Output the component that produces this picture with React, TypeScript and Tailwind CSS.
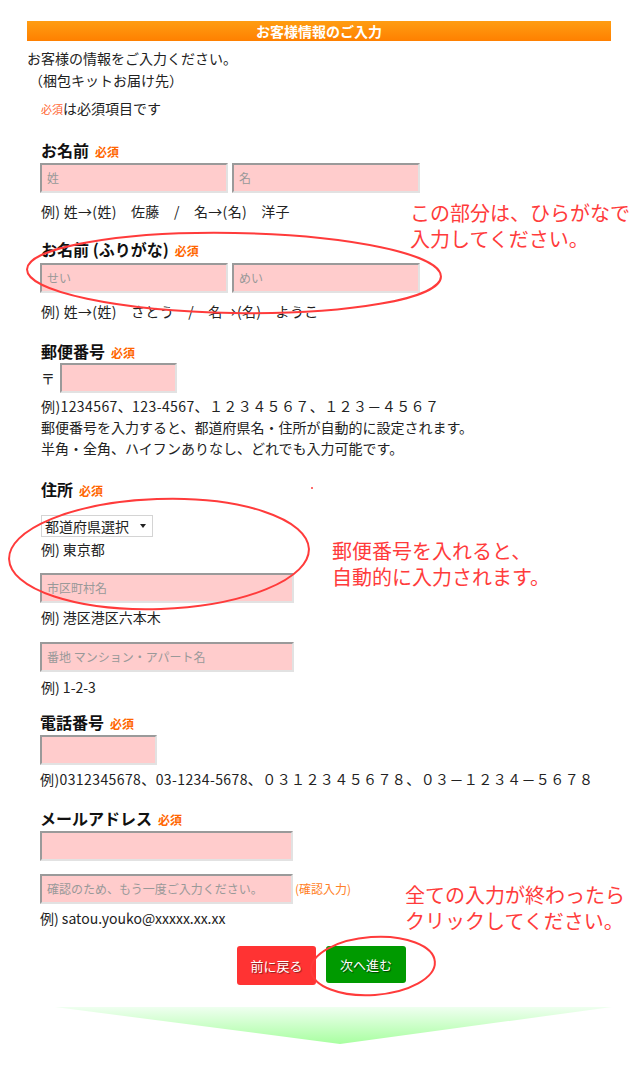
const font = "font-['Noto_Sans_CJK_JP','Noto_Sans',sans-serif]";

const inputCls =
  'h-[30px] bg-[#ffcccc] border-2 border-t-[#9a9a9a] border-l-[#9a9a9a] border-r-[#e2e2e2] border-b-[#e2e2e2] px-[5px] text-[12px] leading-[26px] text-[#999]';

function Required({ small }: { small?: boolean }) {
  return (
    <span className={small ? 'text-[11px] text-[#ff6633]' : 'ml-[6px] text-[12px] font-bold text-[#ff6600]'}>
      必須
    </span>
  );
}

function Heading({ children, className = '' }: { children: React.ReactNode; className?: string }) {
  return (
    <div className={`flex items-baseline h-[22px] leading-[22px] text-[16px] font-bold text-[#111] ${className}`}>
      {children}
      <Required />
    </div>
  );
}

function Field({ w, placeholder, className = '' }: { w: string; placeholder?: string; className?: string }) {
  return <div className={`${inputCls} ${w} ${className}`}>{placeholder}</div>;
}

function Note({ children, className = '' }: { children: React.ReactNode; className?: string }) {
  return <p className={`text-[14px] leading-[22px] text-[#222] ${className}`}>{children}</p>;
}

export default function App() {
  return (
    <div className={`relative w-[640px] min-h-[1090px] bg-white ${font}`}>
      <div className="pt-[21px] pl-[27px]">
        <div className="w-[584px] h-[20px] bg-linear-to-b from-[#ff9d12] to-[#ff8000] text-center text-[14px] leading-[20px] font-bold text-white">
          お客様情報のご入力
        </div>
        <Note className="mt-[6px]">お客様の情報をご入力ください。</Note>
        <Note className="pl-[2px]">（梱包キットお届け先）</Note>
        <Note className="mt-[6px] pl-[14px]">
          <Required small />は必須項目です
        </Note>
      </div>

      <div className="pl-[40px]">
        <Heading className="mt-[19px] pl-[1px]">お名前</Heading>
        <div className="mt-[2px] flex gap-[4px]">
          <Field w="w-[188px]" placeholder="姓" />
          <Field w="w-[188px]" placeholder="名" />
        </div>
        <Note className="mt-[7px] pl-[1px] tracking-[0.3px]">例) 姓→(姓)　佐藤　/　名→(名)　洋子</Note>

        <Heading className="mt-[16px] pl-[1px]">お名前 (ふりがな)</Heading>
        <div className="mt-[3px] flex gap-[4px]">
          <Field w="w-[188px]" placeholder="せい" />
          <Field w="w-[188px]" placeholder="めい" />
        </div>
        <Note className="mt-[7px] pl-[1px] tracking-[0.3px]">例) 姓→(姓)　さとう　/　名→(名)　ようこ</Note>

        <Heading className="mt-[18px] pl-[1px]">郵便番号</Heading>
        <div className="mt-[1px] flex items-center gap-[5px] pl-[1px]">
          <span className="text-[14px] text-[#222]">〒</span>
          <Field w="w-[117px]" />
        </div>
        <div className="mt-[3px] pl-[1px] text-[14px] leading-[21px] text-[#222]">
          <p className="tracking-[0.4px]">例)1234567、123-4567、１２３４５６７、１２３－４５６７</p>
          <p>郵便番号を入力すると、都道府県名・住所が自動的に設定されます。</p>
          <p>半角・全角、ハイフンありなし、どれでも入力可能です。</p>
        </div>

        <Heading className="mt-[19px] pl-[1px]">住所</Heading>
        <div className="mt-[15px] ml-[1px] flex h-[22px] w-[112px] items-center justify-between border border-[#d4d4d4] bg-white pl-[3px] pr-[6px] text-[14px] text-[#222]">
          <span>都道府県選択</span>
          <span className="h-0 w-0 border-x-[3.5px] border-t-[4px] border-x-transparent border-t-[#222]" />
        </div>
        <Note className="mt-[1px] pl-[1px]">例) 東京都</Note>
        <Field w="w-[254px]" placeholder="市区町村名" className="mt-[13px]" />
        <Note className="mt-[3px] pl-[1px]">例) 港区港区六本木</Note>
        <Field w="w-[254px]" placeholder="番地 マンション・アパート名" className="mt-[14px]" />
        <Note className="mt-[4px] pl-[1px]">例) 1-2-3</Note>

        <Heading className="mt-[13px]">電話番号</Heading>
        <Field w="w-[117px]" className="mt-[2px]" />
        <Note className="mt-[3px] tracking-[0.4px]">
          例)0312345678、03-1234-5678、０３１２３４５６７８、０３－１２３４－５６７８
        </Note>

        <Heading className="mt-[17px]">メールアドレス</Heading>
        <Field w="w-[253px]" className="mt-[2px]" />
        <div className="mt-[13px] flex items-center gap-[2px]">
          <Field w="w-[253px]" placeholder="確認のため、もう一度ご入力ください。" />
          <span className="text-[12px] text-[#ff7f27]">(確認入力)</span>
        </div>
        <Note className="mt-[3px]">例) satou.youko@xxxxx.xx.xx</Note>
      </div>

      <div className="mt-[17px] flex justify-center gap-[10px] pl-[3px]">
        <button
          type="button"
          className="h-[39px] w-[79px] rounded-[3px] bg-[#ff3333] text-[13px] text-white [text-shadow:1px_1px_1px_rgba(0,0,0,0.45)]"
        >
          前に戻る
        </button>
        <button
          type="button"
          className="h-[37px] w-[80px] rounded-[3px] bg-[#009a00] text-[13px] text-white [text-shadow:1px_1px_1px_rgba(0,0,0,0.6)]"
        >
          次へ進む
        </button>
      </div>

      <svg className="mt-[21px] block" width="640" height="42" viewBox="0 0 640 42">
        <defs>
          <linearGradient id="arrowGrad" x1="0" y1="0" x2="0" y2="1">
            <stop offset="0" stopColor="#effff0" />
            <stop offset="1" stopColor="#a8ffa0" />
          </linearGradient>
        </defs>
        <polygon points="55,1 612,1 340,38" fill="url(#arrowGrad)" />
      </svg>

      {/* annotations drawn over the form */}
      <svg className="pointer-events-none absolute left-0 top-0" width="640" height="1090">
        <g fill="none" stroke="#ff3b3b" strokeWidth="2">
          <ellipse cx="234" cy="273" rx="207" ry="40" transform="rotate(1 234 273)" />
          <ellipse cx="159" cy="554" rx="150" ry="55" transform="rotate(-2 159 554)" />
          <ellipse cx="373" cy="966" rx="62" ry="29" transform="rotate(-4 373 966)" />
        </g>
        <circle cx="312" cy="488" r="1" fill="#ff3b3b" />
      </svg>
      <p className="absolute left-[410px] top-[200px] text-[20px] leading-[26px] text-[#ff3b3b]">
        この部分は、ひらがなで
        <br />
        入力してください。
      </p>
      <p className="absolute left-[332px] top-[538px] text-[20px] leading-[26px] text-[#ff3b3b]">
        郵便番号を入れると、
        <br />
        自動的に入力されます。
      </p>
      <p className="absolute left-[405px] top-[882px] text-[20px] leading-[26px] text-[#ff3b3b]">
        全ての入力が終わったら
        <br />
        クリックしてください。
      </p>
    </div>
  );
}
